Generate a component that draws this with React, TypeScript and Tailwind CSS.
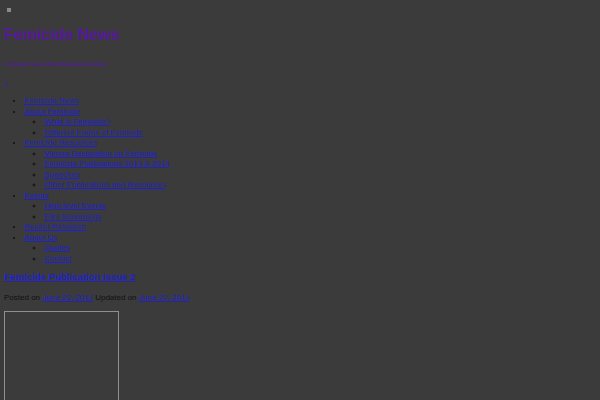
const NAV = [
  { label: "Femicide News" },
  { label: "About Femicide", children: ["What is Femicide?", "Different Forms of Femicide"] },
  {
    label: "Femicide Resources",
    children: [
      "Vienna Declaration on Femicide",
      "Femicide Publications 2013 & 2014",
      "Speeches",
      "Other Publications and Resources",
    ],
  },
  { label: "Events", children: ["High level Events", "Film Screenings"] },
  { label: "Recent Research" },
  { label: "About Us", children: ["Quotes", "Contact"] },
];

export default function App() {
  return (
    <div className="w-[600px] h-[400px] overflow-hidden bg-[#3b3b3b] px-1 [font-family:'Liberation_Sans',Arial,sans-serif] text-[8px] leading-[10.5px] text-[#111]">
      <div className="pt-2 h-[18px]">
        <div className="ml-[3px] w-[4px] h-[4px] bg-[#8a8a8a]" />
      </div>

      <h1 className="mt-[7px] text-[16px] leading-[20px] font-bold text-[#55199a]">
        <a href="#">Femicide News</a>
      </h1>

      <p className="mt-[15px] text-[6px] leading-[8px] font-bold text-[#55199a]">
        A Global Issue that Demands Action
      </p>

      <div className="mt-[14px] h-[6px] text-[6px] leading-[6px] text-[#2a22c0]">≡</div>

      <ul className="mt-[8px] list-disc pl-5 text-[#2121cc]">
        {NAV.map((item) => (
          <li key={item.label} className="marker:text-[#111]">
            <a href="#" className="underline">{item.label}</a>
            {item.children && (
              <ul className="list-[circle] pl-5">
                {item.children.map((c) => (
                  <li key={c} className="marker:text-[#111]">
                    <a href="#" className="underline">{c}</a>
                  </li>
                ))}
              </ul>
            )}
          </li>
        ))}
      </ul>

      <h2 className="mt-[7px] text-[9.6px] leading-[12px] font-bold text-[#2121cc]">
        <a href="#" className="underline">Femicide Publication Issue 2</a>
      </h2>

      <p className="mt-[10px]">
        Posted on <a href="#" className="underline text-[#2121cc]">June 22, 2014</a> Updated on{" "}
        <a href="#" className="underline text-[#2121cc]">June 22, 2014</a>
      </p>

      <div className="mt-[7px] w-[115px] h-[100px] border border-[#8f8f8f]" />
    </div>
  );
}
